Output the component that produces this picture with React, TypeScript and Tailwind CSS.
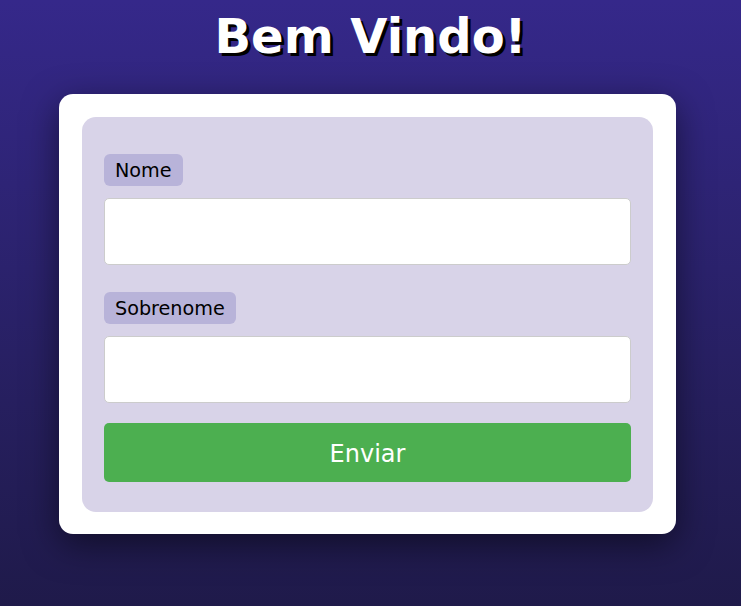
function Field({ label }: { label: string }) {
  return (
    <div className="flex flex-col items-start">
      <label className="bg-[#b8b3d9] text-black text-[19.2px] leading-[22px] px-[11px] pt-[6px] pb-[4px] rounded-[6px]">
        {label}
      </label>
      <input
        type="text"
        className="mt-[12px] w-full h-[67px] bg-white border border-[#cccccc] rounded-[5px] px-3 text-[18px] outline-none"
      />
    </div>
  );
}

export default function App() {
  return (
    <div
      className="min-h-[606px] w-full bg-gradient-to-b from-[#35288a] to-[#1f1a4a] overflow-hidden"
      style={{ fontFamily: '"DejaVu Sans", Verdana, sans-serif' }}
    >
      <h1 className="pt-[8px] text-center text-white text-[48px] leading-[56px] font-bold [text-shadow:3px_3px_0_#000]">
        Bem Vindo!
      </h1>

      <div className="mt-[30px] ml-[59px] w-[617px] bg-white rounded-[14px] p-[23px] pb-[22px] shadow-[0_10px_35px_rgba(0,0,0,0.5)]">
        <form
          className="bg-[#d8d3e8] rounded-[14px] px-[22px] pt-[37px] pb-[30px] flex flex-col"
          onSubmit={(e) => e.preventDefault()}
        >
          <Field label="Nome" />
          <div className="mt-[27px]">
            <Field label="Sobrenome" />
          </div>
          <button
            type="submit"
            className="mt-[20px] h-[59px] w-full bg-[#4caf50] text-white text-[24px] pt-[2px] rounded-[5px]"
          >
            Enviar
          </button>
        </form>
      </div>
    </div>
  );
}
